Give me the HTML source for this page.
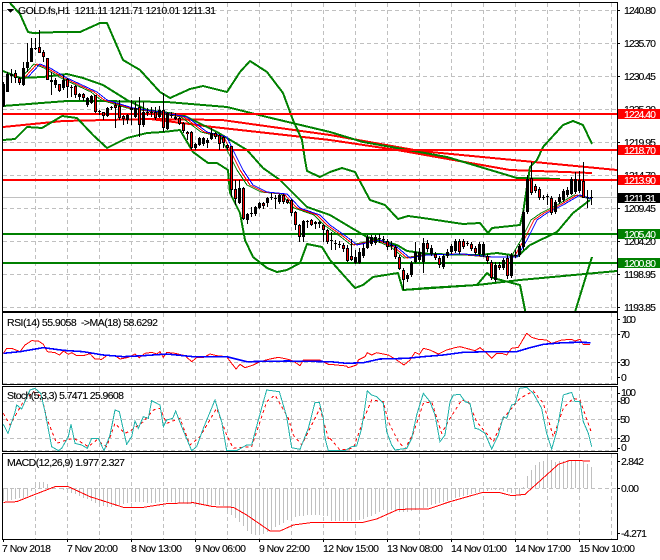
<!DOCTYPE html>
<html><head><meta charset="utf-8"><style>
html,body{margin:0;padding:0;background:#fff;width:660px;height:560px;overflow:hidden}
svg{display:block}
text{font-family:"Liberation Sans",sans-serif;font-size:10.5px;fill:#000;stroke:#000;stroke-width:.12}
.n{vector-effect:non-scaling-stroke;fill:none}
</style></head><body>
<svg width="660" height="560" viewBox="0 0 660 560" shape-rendering="crispEdges">
<defs>
<clipPath id="m"><rect x="3" y="3" width="614" height="308"/></clipPath>
<clipPath id="r"><rect x="3" y="313" width="614" height="71"/></clipPath>
<clipPath id="s"><rect x="3" y="387" width="614" height="64"/></clipPath>
</defs>
<!-- grid -->
<path fill="none" stroke="#c0c0c0" stroke-dasharray="4 3" d="M35.5 3V311M67.5 3V311M99.5 3V311M131.5 3V311M163.5 3V311M195.5 3V311M227.5 3V311M259.5 3V311M291.5 3V311M323.5 3V311M355.5 3V311M387.5 3V311M419.5 3V311M451.5 3V311M483.5 3V311M515.5 3V311M547.5 3V311M579.5 3V311M611.5 3V311
M35.5 313V384M67.5 313V384M99.5 313V384M131.5 313V384M163.5 313V384M195.5 313V384M227.5 313V384M259.5 313V384M291.5 313V384M323.5 313V384M355.5 313V384M387.5 313V384M419.5 313V384M451.5 313V384M483.5 313V384M515.5 313V384M547.5 313V384M579.5 313V384M611.5 313V384
M35.5 387V451M67.5 387V451M99.5 387V451M131.5 387V451M163.5 387V451M195.5 387V451M227.5 387V451M259.5 387V451M291.5 387V451M323.5 387V451M355.5 387V451M387.5 387V451M419.5 387V451M451.5 387V451M483.5 387V451M515.5 387V451M547.5 387V451M579.5 387V451M611.5 387V451
M35.5 454V539M67.5 454V539M99.5 454V539M131.5 454V539M163.5 454V539M195.5 454V539M227.5 454V539M259.5 454V539M291.5 454V539M323.5 454V539M355.5 454V539M387.5 454V539M419.5 454V539M451.5 454V539M483.5 454V539M515.5 454V539M547.5 454V539M579.5 454V539M611.5 454V539
M3 10.500H617M3 43.500H617M3 76.500H617M3 109.500H617M3 142.500H617M3 175.500H617M3 208.500H617M3 241.500H617M3 274.500H617M3 307.500H617
M3 334.500H617M3 362.500H617M3 383.500H617M3 401.500H617M3 419.500H617M3 438.500H617M3 450.500H617M3 488.500H617"/>
<path fill="none" stroke="#c0c0c0" d="M3 197.500H617"/>

<!-- main chart -->
<g clip-path="url(#m)">
<g fill="none" stroke="#ff0000" stroke-width="2">
<path d="M3 127L63 121L150 119L213 127L330 140L397 150L510 170L592 173"/>
<path d="M150 119L222 120L330 135L420 151L617 170"/>
</g>
<g fill="none" stroke="#008000" stroke-width="2" stroke-linejoin="round">
<path d="M10 3L20 14L28 32L33 33L60 32L80 32L100 23L107 23L123 60L140 70L160 92L170 98L190 89L203 86L227 92L240 72L250 61L267 72L283 93L293 120L302 140L305 160L307 171L320 177L330 172L342 168L355 172L370 200L385 205L398 219L408 216L423 218L463 224L480 223L488 233L492 228L520 225L523 213L530 167L537 160L543 147L563 125L573 121L583 125L592 144"/>
<path d="M3 71L20 78L43 77L67 74L83 78L103 85L127 100L147 110L183 115L217 132L247 150L263 168L280 180L293 193L307 207L330 215L350 227L367 237L397 245L407 251L430 254L480 255L497 253L518 256L530 245L557 232L573 213L590 200"/>
<path d="M3 140L15 139L27 127L42 128L62 116L77 118L93 135L107 148L127 138L147 133L163 132L180 130L193 152L208 163L217 163L228 170L230 193L240 213L245 240L253 257L267 268L277 272L287 270L300 263L307 244L322 247L330 260L355 288L363 285L373 277L398 273L403 290L427 288L477 285L487 273L493 278L520 285L527 320"/>
<path d="M575 312L587 273L592 257"/>
<path d="M3 106L67 101L100 101L167 102L227 107L267 117L330 132L363 142L397 148L447 157L497 172L517 178L560 179"/>
<path d="M403 290L477 285L520 280L617 271"/>
</g>
<g stroke="#ff0000" stroke-width="2"><path d="M3 114H617M3 150H617M3 180H617"/></g>
<g stroke="#008000" stroke-width="2"><path d="M3 234H617M3 263H617"/></g>
<!-- moving averages -->
<g fill="none">
<path stroke="#008000" transform="translate(-6,0)" d="M28 77L40 64L50 68L67 78L97 92L107 100L133 108L160 112L187 117L207 132L227 137L233 150L243 170L253 185L267 192L287 194L300 208L320 215L330 225L347 237L357 245L380 240L397 247L410 258L427 255L463 254L493 257L517 257L527 240L537 220L547 213L563 205L580 195L597 199"/>
<path stroke="#ff0000" transform="translate(-3,0)" d="M28 77L40 64L50 68L67 78L97 92L107 100L133 108L160 112L187 117L207 132L227 137L233 150L243 170L253 185L267 192L287 194L300 208L320 215L330 225L347 237L357 245L380 240L397 247L410 258L427 255L463 254L493 257L517 257L527 240L537 220L547 213L563 205L580 195L595 199"/>
<path stroke="#0000ff" d="M28 77L40 64L50 68L67 78L97 92L107 100L133 108L160 112L187 117L207 132L227 137L233 150L243 170L253 185L267 192L287 194L300 208L320 215L330 225L347 237L357 245L380 240L397 247L410 258L427 255L463 254L493 257L517 257L527 240L537 220L547 213L563 205L580 195L592 199"/>
</g>
<!-- candle wicks -->
<path stroke="#000" fill="none" d="M3.500 82V107M7.500 72V92M11.500 69V83M15.500 70V83M19.500 77V85M23.500 62V86M27.500 43V72M31.500 38V62M35.500 38V50M39.500 30V53M43.500 50V62M47.500 58V80M51.500 72V95M55.500 78V88M59.500 84V92M63.500 75V90M67.500 78V98M71.500 85V97M75.500 85V98M79.500 93V100M83.500 93V101M87.500 97V107M91.500 95V104M95.500 95V113M99.500 110V115M103.500 112V120M107.500 107V117M111.500 106V110M115.500 103V128M119.500 100V120M123.500 115V125M127.500 114V124M131.500 100V125M135.500 102V118M139.500 97V137M143.500 102V127M147.500 108V116M151.500 107V117M155.500 107V120M159.500 106V118M163.500 93V132M167.500 112V130M171.500 112V118M175.500 113V120M179.500 117V125M183.500 122V133M187.500 131V140M191.500 131V150M195.500 143V150M199.500 137V146M203.500 137V146M207.500 138V148M211.500 128V140M215.500 132V139M219.500 134V150M223.500 136V148M227.500 144V150M231.500 146V197M235.500 180V205M239.500 180V204M243.500 187V220M247.500 213V224M251.500 207V217M255.500 206V216M259.500 202V209M263.500 202V209M267.500 197V207M271.500 193V200M275.500 195V209M279.500 194V204M283.500 194V204M287.500 199V204M291.500 199V216M295.500 211V230M299.500 224V242M303.500 220V242M307.500 220V228M311.500 219V226M315.500 221V229M319.500 221V228M323.500 224V242M327.500 229V244M331.500 232V250M335.500 240V250M339.500 241V248M343.500 243V252M347.500 245V262M351.500 239V261M355.500 250V264M359.500 248V264M363.500 244V258M367.500 235V249M371.500 235V246M375.500 235V245M379.500 234V243M383.500 236V243M387.500 239V250M391.500 241V250M395.500 245V259M399.500 255V270M403.500 268V290M407.500 273V282M411.500 261V277M415.500 242V263M419.500 248V262M423.500 238V273M427.500 240V252M431.500 245V256M435.500 252V260M439.500 256V268M443.500 254V269M447.500 249V258M451.500 244V254M455.500 239V253M459.500 239V254M463.500 239V249M467.500 241V246M471.500 242V251M475.500 246V255M479.500 242V256M483.500 242V257M487.500 254V264M491.500 260V280M495.500 262V282M499.500 262V270M503.500 258V270M507.500 255V279M511.500 253V278M515.500 250V258M519.500 244V257M523.500 210V250M527.500 175V214M531.500 162V195M535.500 184V193M539.500 187V200M543.500 195V200M547.500 194V205M551.500 196V215M555.500 200V214M559.500 194V204M563.500 189V202M567.500 187V197M571.500 177V195M575.500 172V194M579.500 171V193M583.500 162V198M587.500 190V208M591.500 190V205"/>
<!-- candle bodies -->
<path stroke="#000" stroke-width="3" fill="none" d="M3.500 84V106M7.500 74V92M11.500 74V76M15.500 73V78M19.500 78V83M23.500 68V85M27.500 62V68M31.500 48V62M35.500 48V49M39.500 47V53M43.500 52V57M47.500 58V80M51.500 80V82M55.500 80V85M59.500 84V91M63.500 80V88M67.500 79V87M71.500 87V88M75.500 86V95M79.500 94V97M83.500 94V98M87.500 98V105M91.500 96V103M95.500 95V112M99.500 111V112M103.500 112V116M107.500 108V116M111.500 107V108M115.500 105V108M119.500 106V118M123.500 116V119M127.500 115V120M131.500 108V110M135.500 108V117M139.500 107V125M143.500 112V125M147.500 112V113M151.500 112V113M155.500 112V118M159.500 110V117M163.500 110V128M167.500 113V129M171.500 115V116M175.500 117V119M179.500 118V124M183.500 123V131M187.500 132V134M191.500 132V148M195.500 144V148M199.500 138V145M203.500 138V144M207.500 140V143M211.500 133V139M215.500 133V137M219.500 135V144M223.500 137V143M227.500 145V148M231.500 146V190M235.500 189V199M239.500 188V203M243.500 188V219M247.500 214V220M251.500 213V214M255.500 207V214M259.500 203V208M263.500 203V206M267.500 198V203M271.500 197V198M275.500 198V199M279.500 195V202M283.500 195V202M287.500 200V203M291.500 200V213M295.500 212V225M299.500 225V237M303.500 221V237M307.500 221V222M311.500 220V225M315.500 222V224M319.500 222V224M323.500 225V230M327.500 230V242M331.500 240V241M335.500 243V244M339.500 244V245M343.500 245V249M347.500 248V261M351.500 256V260M355.500 257V263M359.500 252V263M363.500 248V256M367.500 237V248M371.500 237V244M375.500 237V243M379.500 238V239M383.500 239V240M387.500 241V247M391.500 245V246M395.500 247V257M399.500 257V269M403.500 270V280M407.500 275V279M411.500 263V275M415.500 252V262M419.500 252V260M423.500 243V262M427.500 243V249M431.500 248V254M435.500 254V258M439.500 258V265M443.500 256V267M447.500 252V256M451.500 246V252M455.500 241V251M459.500 241V252M463.500 241V247M467.500 243V244M471.500 244V249M475.500 248V253M479.500 244V254M483.500 244V255M487.500 256V261M491.500 262V278M495.500 265V280M499.500 265V268M503.500 260V268M507.500 258V276M511.500 255V276M515.500 255V256M519.500 246V255M523.500 212V247M527.500 179V212M531.500 178V193M535.500 186V191M539.500 189V198M543.500 197V198M547.500 196V197M551.500 198V213M555.500 202V212M559.500 197V202M563.500 191V200M567.500 190V195M571.500 179V194M575.500 179V192M579.500 180V191M583.500 181V198M587.500 197V198M591.500 197V198"/>
<path stroke="#ff0000" fill="none" d="M15.500 74V77M19.500 79V82M39.500 48V52M43.500 53V56M47.500 59V79M59.500 85V90M67.500 80V86M75.500 87V94M83.500 95V97M95.500 96V111M103.500 113V115M115.500 106V107M119.500 107V117M123.500 117V118M139.500 108V124M155.500 113V117M163.500 111V127M179.500 119V123M183.500 124V130M187.500 133V134M191.500 133V147M215.500 134V136M219.500 136V143M223.500 138V142M227.500 146V147M231.500 147V189M235.500 190V198M243.500 189V218M263.500 204V205M283.500 196V201M287.500 201V202M291.500 201V212M295.500 213V224M299.500 226V236M311.500 221V224M323.500 226V229M327.500 231V241M343.500 246V248M347.500 249V260M351.500 257V259M387.500 242V246M395.500 248V256M399.500 258V268M403.500 271V279M427.500 244V248M435.500 255V257M439.500 259V264M459.500 242V251M463.500 242V246M471.500 245V248M475.500 249V252M487.500 257V260M491.500 263V277M499.500 266V267M507.500 259V275M531.500 179V192M535.500 187V190M539.500 190V197M551.500 199V212M583.500 182V197"/>
</g>

<!-- RSI -->
<g clip-path="url(#r)"><g transform="translate(0,305) scale(.33333)">
<polyline class="n" stroke="#ff0000" points="10,145 20,130 35,130 60,140 75,120 95,107 115,108 130,118 142,140 165,143 178,150 190,138 205,148 215,143 230,152 250,152 270,146 285,162 305,163 320,152 345,152 360,162 385,157 405,147 418,158 435,145 455,142 470,147 480,140 490,157 500,142 525,145 555,152 575,170 590,158 610,158 630,147 650,152 680,155 695,175 708,192 720,178 735,188 760,180 780,170 810,162 835,157 860,162 880,168 900,182 910,165 960,165 985,178 990,178"/>
<polyline class="n" stroke="#0000ff" stroke-width="1.6" points="10,145 60,140 130,128 190,136 250,140 310,150 370,155 430,152 500,147 580,155 680,155 740,170 860,168 990,170"/>
</g>
<g transform="translate(330,305) scale(.33333)">
<polyline class="n" stroke="#ff0000" points="0,178 50,183 55,188 80,180 85,165 105,155 112,143 125,150 140,143 175,150 200,165 222,180 240,165 255,142 268,148 280,130 300,135 325,147 350,135 375,128 390,125 420,133 435,137 450,128 465,140 485,160 500,145 515,145 530,150 545,130 565,127 590,85 605,97 625,103 650,105 665,115 695,105 725,103 735,108 750,103 760,118 780,118"/>
<polyline class="n" stroke="#0000ff" stroke-width="1.6" points="0,170 50,175 100,173 150,162 230,160 280,155 340,150 400,142 480,140 560,140 600,128 640,118 700,113 750,112 782,113"/>
</g></g>

<!-- Stochastic -->
<g clip-path="url(#s)"><g transform="translate(0,305) scale(.33333)">
<polyline class="n" stroke="#ff0000" stroke-dasharray="3 3" points="10,325 30,360 50,325 70,290 100,260 125,275 140,340 170,415 200,405 220,400 240,410 265,425 290,405 320,425 345,355 375,385 395,375 430,350 460,315 480,310 500,355 540,340 570,420 600,395 650,310 680,390 700,430 755,425 800,290 825,270 865,340 880,390 905,420 960,310 985,400 990,400"/>
<polyline class="n" stroke="#20b2aa" points="10,358 24,385 45,322 50,300 65,312 90,255 105,250 122,265 135,320 155,425 175,437 185,430 205,395 213,358 225,415 245,420 262,430 275,400 295,400 312,437 330,390 345,315 358,320 380,418 395,395 405,348 415,370 430,335 445,340 455,287 480,300 490,365 500,345 518,340 527,318 545,365 575,437 590,425 610,370 645,285 665,350 680,437 710,437 740,420 755,420 775,345 800,255 838,260 860,335 875,428 900,433 925,370 945,292 958,292 970,340 975,400 985,437 990,437"/>
</g>
<g transform="translate(330,305) scale(.33333)">
<polyline class="n" stroke="#ff0000" stroke-dasharray="3 3" points="0,400 30,435 70,430 100,345 125,285 160,290 175,350 205,410 225,432 250,385 280,295 305,290 335,385 360,340 395,285 415,290 440,350 490,410 520,340 570,280 610,258 640,295 670,395 700,310 730,280 750,285 785,385"/>
<polyline class="n" stroke="#20b2aa" points="0,437 45,437 65,425 80,423 95,370 112,257 125,270 140,275 160,295 170,380 185,420 195,435 230,430 245,400 260,330 280,265 300,290 315,330 330,410 345,390 360,290 370,270 390,268 405,290 420,295 435,370 445,372 465,385 485,432 505,390 520,335 530,340 545,300 555,297 568,250 590,247 610,265 635,310 650,385 665,432 680,380 700,270 725,262 735,290 750,290 760,350 775,385 785,425"/>
</g></g>

<!-- MACD -->
<path stroke="#c0c0c0" fill="none" d="M3.500 488V501M7.500 488V501M11.500 488V500M15.500 488V499M19.500 488V498M23.500 488V498M27.500 488V496M31.500 488V491M35.500 488V484M39.500 488V482M43.500 488V482M47.500 488V484M51.500 488V487M59.500 488V489M63.500 488V490M67.500 488V491M71.500 488V493M75.500 488V494M79.500 488V496M83.500 488V498M87.500 488V499M91.500 488V501M95.500 488V503M99.500 488V505M103.500 488V506M107.500 488V507M111.500 488V507M115.500 488V506M119.500 488V505M123.500 488V504M127.500 488V503M131.500 488V502M135.500 488V502M139.500 488V502M143.500 488V502M147.500 488V503M151.500 488V503M155.500 488V503M159.500 488V502M163.500 488V502M167.500 488V502M171.500 488V502M175.500 488V503M179.500 488V503M183.500 488V503M187.500 488V504M191.500 488V504M195.500 488V505M199.500 488V505M203.500 488V505M207.500 488V505M211.500 488V505M215.500 488V505M219.500 488V505M223.500 488V506M227.500 488V510M231.500 488V515M235.500 488V518M239.500 488V522M243.500 488V526M247.500 488V531M251.500 488V534M255.500 488V535M259.500 488V535M263.500 488V534M267.500 488V532M271.500 488V530M275.500 488V527M279.500 488V525M283.500 488V523M287.500 488V520M291.500 488V518M295.500 488V517M299.500 488V516M303.500 488V516M307.500 488V515M311.500 488V515M315.500 488V515M319.500 488V515M323.500 488V516M327.500 488V516M331.500 488V521M335.500 488V521M339.500 488V521M343.500 488V521M347.500 488V521M351.500 488V521M355.500 488V520M359.500 488V520M363.500 488V519M367.500 488V517M371.500 488V516M375.500 488V514M379.500 488V512M383.500 488V510M387.500 488V510M391.500 488V510M395.500 488V511M399.500 488V512M403.500 488V512M407.500 488V512M411.500 488V511M415.500 488V510M419.500 488V509M423.500 488V508M427.500 488V507M431.500 488V505M435.500 488V504M439.500 488V503M443.500 488V502M447.500 488V501M451.500 488V500M455.500 488V498M459.500 488V497M463.500 488V496M467.500 488V495M471.500 488V494M475.500 488V493M479.500 488V492M483.500 488V492M487.500 488V491M491.500 488V490M495.500 488V490M499.500 488V490M503.500 488V491M507.500 488V492M511.500 488V493M515.500 488V494M519.500 488V495M523.500 488V487M527.500 488V476M531.500 488V470M535.500 488V465M539.500 488V462M543.500 488V461M547.500 488V458M551.500 488V460M555.500 488V462M559.500 488V461M563.500 488V461M567.500 488V461M571.500 488V461M575.500 488V461M579.500 488V462M583.500 488V462M587.500 488V464M591.500 488V467"/>
<g transform="translate(0,445) scale(.33333)"><polyline class="n" stroke="#ff0000" points="10,172 50,170 100,150 165,125 205,125 270,155 370,187 430,187 500,176 580,173 640,185 700,187 740,210 810,258 840,258 880,240 940,232 990,232"/></g>
<g transform="translate(330,445) scale(.33333)"><polyline class="n" stroke="#ff0000" points="0,232 100,232 140,222 205,193 295,192 360,170 455,143 510,143 545,152 585,148 685,58 720,46 780,48"/></g>

<!-- frames -->
<path fill="none" stroke="#000" d="M2.500 2.500H617.500V311.500H2.500ZM2.500 312.500H617.500V384.500H2.500ZM2.500 386.500H617.500V451.500H2.500ZM2.500 453.500H617.500V539.500H2.500Z"/>
<!-- ticks -->
<path stroke="#000" fill="none" d="M617 10.500h3M617 43.500h3M617 76.500h3M617 109.500h3M617 142.500h3M617 175.500h3M617 208.500h3M617 241.500h3M617 274.500h3M617 307.500h3M617 319.500h3M617 334.500h3M617 362.500h3M617 377.500h3M617 393.500h3M617 401.500h3M617 419.500h3M617 438.500h3M617 448.500h3M617 461.500h3M617 488.500h3M617 533.500h3M3.500 539v3M67.500 539v3M131.500 539v3M195.500 539v3M259.500 539v3M323.500 539v3M387.500 539v3M451.500 539v3M515.500 539v3M579.500 539v3"/>
<path d="M7 9h7l-3.500 4z" fill="#000"/>

<text x="18" y="14" textLength="198" lengthAdjust="spacing" xml:space="preserve">GOLD.fs,H1  1211.11 1211.71 1210.01 1211.31</text>
<text x="7" y="326" textLength="151" lengthAdjust="spacing" xml:space="preserve">RSI(14) 55.9058  -&gt;MA(18) 58.6292</text>
<text x="7" y="399" textLength="117" lengthAdjust="spacing">Stoch(5,3,3) 5.7471 25.9608</text>
<text x="7" y="466" textLength="118" lengthAdjust="spacing">MACD(12,26,9) 1.977 2.327</text>

<!-- price axis -->
<g>
<text x="624" y="14" textLength="32">1240.80</text>
<text x="624" y="47" textLength="32">1235.70</text>
<text x="624" y="80" textLength="32">1230.45</text>
<text x="624" y="113" textLength="32">1225.20</text>
<text x="624" y="146" textLength="32">1219.95</text>
<text x="624" y="179" textLength="32">1214.70</text>
<text x="624" y="212" textLength="32">1209.45</text>
<text x="624" y="245" textLength="32">1204.20</text>
<text x="624" y="278" textLength="32">1198.95</text>
<text x="624" y="311" textLength="32">1193.85</text>
<text x="622" y="323" textLength="14">100</text>
<text x="620" y="338" textLength="10">70</text>
<text x="620" y="366" textLength="10">30</text>
<text x="621" y="381">0</text>
<text x="621" y="396" textLength="15">100</text>
<text x="620" y="404" textLength="10">80</text>
<text x="620" y="423" textLength="10">50</text>
<text x="620" y="442" textLength="10">20</text>
<text x="621" y="451">0</text>
<text x="621" y="465" textLength="23">2.842</text>
<text x="621" y="492" textLength="18">0.00</text>
<text x="621" y="537" textLength="26">-4.271</text>
</g>
<rect x="618" y="109" width="42" height="10" fill="#ff0000"/>
<rect x="618" y="145" width="42" height="10" fill="#ff0000"/>
<rect x="618" y="175" width="42" height="10" fill="#ff0000"/>
<rect x="618" y="193" width="42" height="10" fill="#000"/>
<rect x="618" y="229" width="42" height="10" fill="#008000"/>
<rect x="618" y="258" width="42" height="10" fill="#008000"/>
<text x="624" y="118" textLength="32" style="fill:#fff;stroke:#fff">1224.40</text>
<text x="624" y="154" textLength="32" style="fill:#fff;stroke:#fff">1218.70</text>
<text x="624" y="184" textLength="32" style="fill:#fff;stroke:#fff">1213.90</text>
<text x="624" y="202" textLength="32" style="fill:#fff;stroke:#fff">1211.31</text>
<text x="624" y="238" textLength="32" style="fill:#fff;stroke:#fff">1205.40</text>
<text x="624" y="267" textLength="32" style="fill:#fff;stroke:#fff">1200.80</text>

<!-- time axis -->
<text x="2" y="552" textLength="49">7 Nov 2018</text>
<text x="67" y="552" textLength="51">7 Nov 20:00</text>
<text x="131" y="552" textLength="51">8 Nov 13:00</text>
<text x="195" y="552" textLength="51">9 Nov 06:00</text>
<text x="259" y="552" textLength="51">9 Nov 22:00</text>
<text x="323" y="552" textLength="56">12 Nov 15:00</text>
<text x="387" y="552" textLength="56">13 Nov 08:00</text>
<text x="451" y="552" textLength="56">14 Nov 01:00</text>
<text x="515" y="552" textLength="56">14 Nov 17:00</text>
<text x="579" y="552" textLength="56">15 Nov 10:00</text>
</svg>
</body></html>
